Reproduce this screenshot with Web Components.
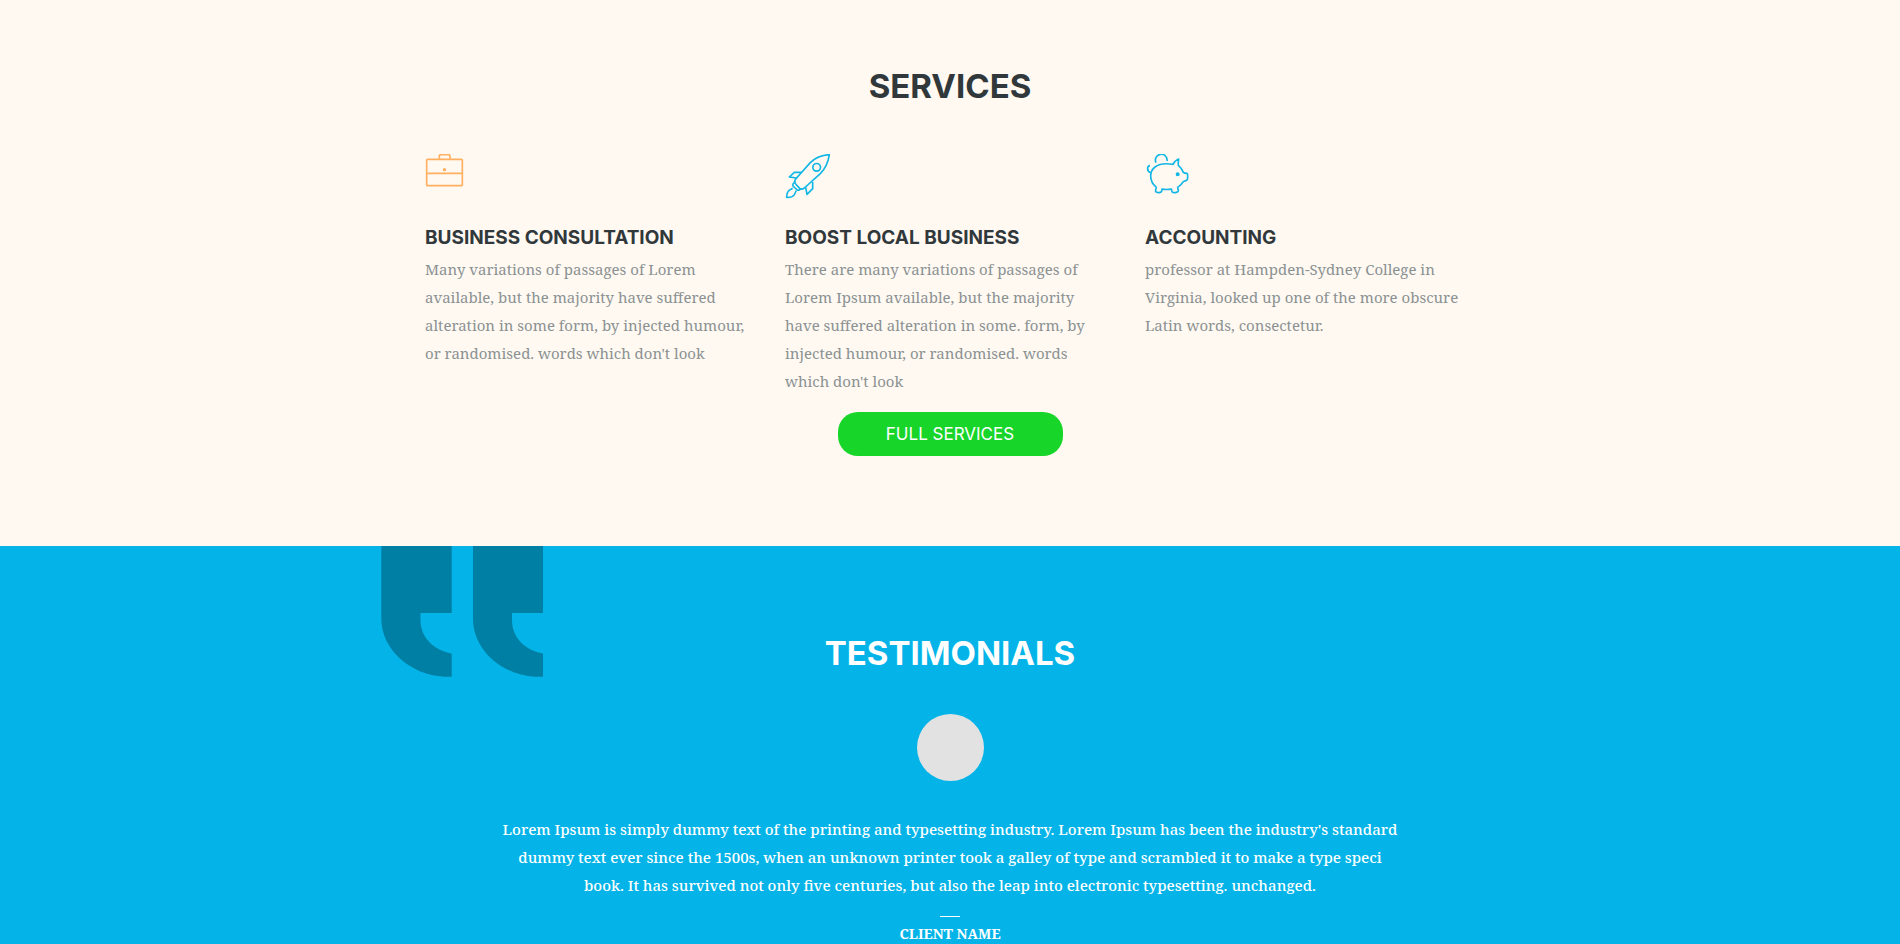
<!DOCTYPE html>
<html lang="en">
<head>
<meta charset="utf-8">
<meta name="viewport" content="width=device-width, initial-scale=1">
<title>Services</title>
<style>
  :root {
    --cream: #fff9f2;
    --blue: #04b4e8;
    --ink: #30383b;
    --muted: #8b9292;
    --display: Inter, "Open Sans", sans-serif;
    --serif: "Noto Serif", "DejaVu Serif", serif;
  }
  body {
    margin: 0;
    min-height: 100vh;
    display: flex;
    flex-direction: column;
    font: 15px/28px var(--serif);
    background: var(--blue);
  }
</style>
</head>
<body>
<services-section heading="Services">
  <service-card icon="briefcase" heading="Business consultation">Many variations of passages of Lorem available, but the majority have suffered alteration in some form, by injected humour, or randomised. words which don't look</service-card>
  <service-card icon="rocket" heading="Boost local business">There are many variations of passages of Lorem Ipsum available, but the majority have suffered alteration in some. form, by injected humour, or randomised. words which don't look</service-card>
  <service-card icon="piggy" heading="Accounting">professor at Hampden-Sydney College in Virginia, looked up one of the more obscure Latin words, consectetur.</service-card>
  <pill-button slot="action">Full services</pill-button>
</services-section>
<testimonials-section heading="Testimonials">
  <testimonial-quote client="Client name">Lorem Ipsum is simply dummy text of the printing and typesetting industry. Lorem Ipsum has been the industry's standard dummy text ever since the 1500s, when an unknown printer took a galley of type and scrambled it to make a type speci book. It has survived not only five centuries, but also the leap into electronic typesetting. unchanged.</testimonial-quote>
</testimonials-section>

<script>
const icons = {
  briefcase: `<g stroke="#ffb061"><rect x="50" y="58" width="107" height="79" rx="3"/><path d="M50 100H157M88 57V48Q88 44 92 44H116Q120 44 120 48V57"/><circle cx="103.500" cy="89" r="2.500" fill="#ffa94d"/></g>`,
  rocket: `<g stroke="#12b7e5"><path d="M178 44C157 45 138 51 121 68L77 117Q71 126 77 132L89 145Q95 150 103 144L151 101C168 84 175 65 178 44Z"/><circle cx="140" cy="82" r="11.500"/><path d="M95 97H73L58 111L79 114M128 126V146L111 163L107 142M76 124L69 132Q67 136 70 139L82 150Q86 152 89 149L94 145M63 148Q50 153 50 172Q72 174 76 157M63 148L68 145M76 157L79 152"/></g>`,
  piggy: `<g stroke="#12b7e5"><path d="M129 73Q135 61 146 57Q144 68 145 76Q155 84 160 97Q163 100 171 100Q174 103 173 110Q173 119 170 121Q163 123 160 125Q154 135 143 142Q143 147 145 149Q146 156 139 157Q129 159 126 155L124 147Q110 150 96 147Q96 156 91 157Q81 159 77 155Q76 151 79 142Q62 128 62 107Q62 91 75 81Q93 67 129 73Z"/><path d="M78 68A17.500 17.500 0 1 1 111 63M62 98Q52 95 53 84Q54 77 60 77"/><circle cx="143" cy="103" r="3.500" fill="#12b7e5"/></g>`
};

function render(host, html) {
  const template = document.createElement('template');
  template.innerHTML = html;
  host.attachShadow({ mode: 'open' }).append(template.content.cloneNode(true));
}

customElements.define('service-card', class extends HTMLElement {
  connectedCallback() {
    if (this.shadowRoot) return;
    render(this, `
      <style>
        :host { display: block; color: var(--muted); }
        svg { display: block; width: 45px; height: 50px; fill: none; stroke-width: 5; stroke-linejoin: round; }
        h3 { margin: 20px 0 3px; font: 700 19px/28px var(--display); color: var(--ink); text-transform: uppercase; }
        p { margin: 0; padding-right: 6px; }
      </style>
      <svg viewBox="45 42 135 150" aria-hidden="true">${icons[this.getAttribute('icon')]}</svg>
      <h3>${this.getAttribute('heading')}</h3>
      <p><slot></slot></p>`);
  }
});

customElements.define('pill-button', class extends HTMLElement {
  connectedCallback() {
    if (this.shadowRoot) return;
    render(this, `
      <style>
        :host { display: inline-block; }
        button { display: block; min-width: 225px; height: 44px; padding: 0 48px; border: 0; border-radius: 20px; background: #17d629; color: #fff; font: 400 17px/44px var(--display); text-transform: uppercase; white-space: nowrap; cursor: pointer; }
      </style>
      <button type="button"><slot></slot></button>`);
  }
});

customElements.define('services-section', class extends HTMLElement {
  connectedCallback() {
    if (this.shadowRoot) return;
    render(this, `
      <style>
        :host { display: block; background: var(--cream); }
        section { max-width: 1050px; margin: 0 auto; padding: 63px 24px 90px; }
        h2 { margin: 0 0 45px; font: 700 33px/46px var(--display); color: var(--ink); text-align: center; text-transform: uppercase; }
        .cards { display: grid; grid-template-columns: repeat(auto-fit, minmax(260px, 1fr)); gap: 30px; }
        .action { margin-top: 17px; text-align: center; }
        ::slotted(pill-button) { vertical-align: top; }
      </style>
      <section>
        <h2>${this.getAttribute('heading')}</h2>
        <div class="cards"><slot></slot></div>
        <div class="action"><slot name="action"></slot></div>
      </section>`);
  }
});

customElements.define('testimonial-quote', class extends HTMLElement {
  connectedCallback() {
    if (this.shadowRoot) return;
    render(this, `
      <style>
        :host { display: block; color: #fff; text-align: center; }
        figure { display: flex; flex-direction: column; align-items: center; margin: 0; }
        .avatar { width: 67px; height: 67px; border-radius: 50%; background: #e2e2e2; }
        blockquote { max-width: 900px; margin: 34px 0 17px; font-weight: 500; }
        .rule { width: 20px; height: 1px; background: #fff; }
        figcaption { margin-top: 3px; font-size: 14px; font-weight: 700; text-transform: uppercase; }
      </style>
      <figure>
        <div class="avatar"></div>
        <blockquote><slot></slot></blockquote>
        <div class="rule"></div>
        <figcaption>${this.getAttribute('client')}</figcaption>
      </figure>`);
  }
});

customElements.define('testimonials-section', class extends HTMLElement {
  connectedCallback() {
    if (this.shadowRoot) return;
    render(this, `
      <style>
        :host { display: block; flex: 1; background: var(--blue); }
        section { position: relative; max-width: 1140px; margin: 0 auto; padding: 84px 0 0; }
        .mark { position: absolute; top: 0; left: 0; width: 164px; height: 131px; fill: #007fa4; }
        h2 { position: relative; margin: 0 0 38px; font: 700 33px/46px var(--display); color: #fff; text-align: center; text-transform: uppercase; }
      </style>
      <section>
        <svg class="mark" viewBox="0 0 164 131" aria-hidden="true">
          <path d="M1.300 0H71.700V67H40.500V74C40.500 91 53 104 71.700 107.500V130.700H64C30 129 1.300 103 1.300 73Z"/>
          <path d="M93 0H163V67H132V74C132 91 144 104 163 107.500V130.700H155C121 129 93 103 93 73Z"/>
        </svg>
        <h2>${this.getAttribute('heading')}</h2>
        <slot></slot>
      </section>`);
  }
});
</script>
</body>
</html>
